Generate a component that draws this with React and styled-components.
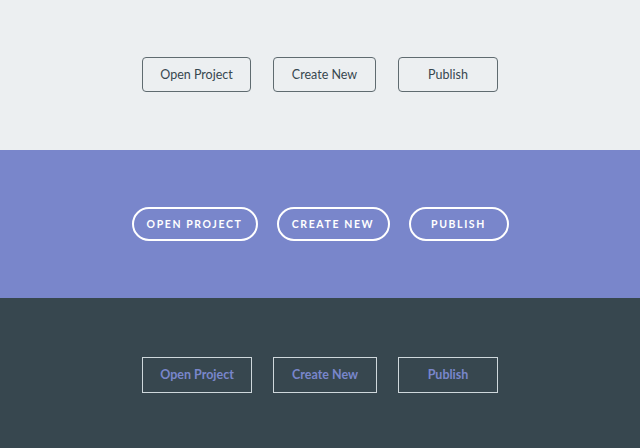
import React from "react";
import styled, { createGlobalStyle, css } from "styled-components";

const GlobalStyle = createGlobalStyle`
  html, body { margin: 0; padding: 0; }
  body { font-family: Lato, "Liberation Sans", sans-serif; }
`;

const sections = {
  light: { bg: "#eceff1", height: 150, gap: 22, offset: -1 },
  purple: { bg: "#7986cb", height: 148, gap: 19, offset: 0 },
  dark: { bg: "#37474f", height: 150, gap: 21, offset: 3 },
};

const Section = styled.section`
  box-sizing: border-box;
  height: ${(p) => sections[p.$variant].height}px;
  padding-top: ${(p) => Math.max(sections[p.$variant].offset, 0)}px;
  padding-bottom: ${(p) => Math.max(-sections[p.$variant].offset, 0)}px;
  background: ${(p) => sections[p.$variant].bg};
  display: flex;
  align-items: center;
  justify-content: center;
  gap: ${(p) => sections[p.$variant].gap}px;
`;

const Button = styled.button`
  font-family: Lato, "Liberation Sans", sans-serif;
  box-sizing: border-box;
  width: ${(p) => p.$width}px;
  background: transparent;
  cursor: pointer;
  padding: 0;
  display: flex;
  align-items: center;
  justify-content: center;

  ${(p) =>
    p.$variant === "light" &&
    css`
      height: 35px;
      border: 1px solid #5f6b70;
      border-radius: 4px;
      color: #37474f;
      font-size: 12.5px;
      font-weight: 400;
    `}

  ${(p) =>
    p.$variant === "purple" &&
    css`
      height: 34px;
      border: 2px solid #fff;
      border-radius: 17px;
      color: #fff;
      font-size: 10.5px;
      font-weight: 700;
      letter-spacing: 1.6px;
      text-transform: uppercase;
    `}

  ${(p) =>
    p.$variant === "dark" &&
    css`
      height: 36px;
      border: 1px solid #cfd8dc;
      border-radius: 0;
      color: #7986cb;
      font-size: 12.5px;
      font-weight: 700;
    `}
`;

const widths = {
  light: [109, 103, 100],
  purple: [126, 113, 100],
  dark: [110, 104, 100],
};

const labels = ["Open Project", "Create New", "Publish"];

export default function App() {
  return (
    <>
      <GlobalStyle />
      {Object.keys(widths).map((variant) => (
        <Section key={variant} $variant={variant}>
          {labels.map((label, i) => (
            <Button key={label} $variant={variant} $width={widths[variant][i]}>
              {label}
            </Button>
          ))}
        </Section>
      ))}
    </>
  );
}
